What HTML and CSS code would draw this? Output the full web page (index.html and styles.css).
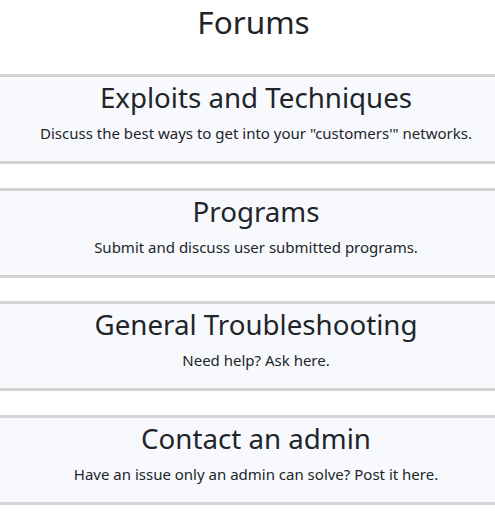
FILE: index.html
```html
<!DOCTYPE html>
<html lang="en">
<head>
<meta charset="utf-8">
<title>Forums</title>
<link rel="stylesheet" href="styles.css">
</head>
<body>
<h1 class="page-title">Forums</h1>
<div class="forum-list">
  <a class="forum-card" href="#">
    <h2 class="forum-name">Exploits and Techniques</h2>
    <p class="forum-desc">Discuss the best ways to get into your "customers'" networks.</p>
  </a>
  <a class="forum-card" href="#">
    <h2 class="forum-name">Programs</h2>
    <p class="forum-desc">Submit and discuss user submitted programs.</p>
  </a>
  <a class="forum-card" href="#">
    <h2 class="forum-name">General Troubleshooting</h2>
    <p class="forum-desc">Need help? Ask here.</p>
  </a>
  <a class="forum-card" href="#">
    <h2 class="forum-name">Contact an admin</h2>
    <p class="forum-desc">Have an issue only an admin can solve? Post it here.</p>
  </a>
</div>
</body>
</html>
```
FILE: styles.css
```css
html, body {
  margin: 0;
  padding: 0;
  background: #ffffff;
}
body {
  font-family: "Noto Sans", "Open Sans", sans-serif;
  color: #212529;
}
.page-title {
  margin: 0;
  padding-left: 12px;
  text-align: center;
  font-weight: 400;
  font-size: 31.5px;
  line-height: 43px;
}
.forum-list {
  display: flex;
  flex-direction: column;
  gap: 23.67px;
  margin-top: 31px;
}
.forum-card {
  display: block;
  text-decoration: none;
  color: inherit;
  background: #f8f9fd;
  border-top: 3px solid #d3d3d3;
  border-bottom: 3px solid #d3d3d3;
  text-align: center;
  padding: 1px 0 17px 17px;
}
.forum-name {
  margin: 0;
  font-weight: 400;
  font-size: 27.7px;
  line-height: 38px;
}
.forum-desc {
  margin: 6px 0 0;
  font-size: 15px;
  line-height: 22px;
}
```
